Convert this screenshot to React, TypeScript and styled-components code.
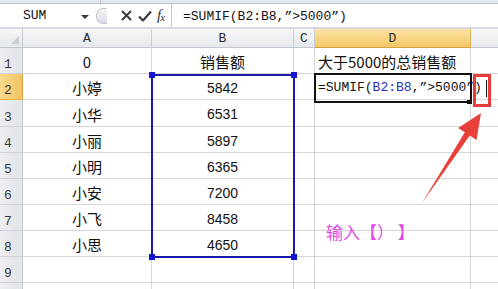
import React from 'react'
import styled, { createGlobalStyle } from 'styled-components'

const GlobalStyle = createGlobalStyle`
  html, body {
    margin: 0;
    padding: 0;
    background: #ffffff;
    overflow: hidden;
  }
`

const CJK = `"Noto Sans CJK SC", "Liberation Sans", sans-serif`
const MONO = `"Liberation Mono", "Noto Sans CJK SC", monospace`

const Root = styled.div`
  position: relative;
  width: 498px;
  height: 289px;
  overflow: hidden;
  background: #ffffff;
  display: flex;
  flex-direction: column;
`

const TopStrip = styled.div`
  height: 4px;
  flex: none;
  background: #e3e7ec;
  border-bottom: 1px solid #b8c0ca;
  box-sizing: border-box;
  display: flex;
`

const StripDivider = styled.div`
  width: 100px;
  border-right: 1px solid #b8c0ca;
`

const FormulaBar = styled.div`
  height: 23px;
  flex: none;
  display: flex;
  background: #ffffff;
`

const NameBox = styled.div`
  width: 92px;
  display: flex;
  align-items: center;
  box-sizing: border-box;
  padding-left: 23px;
  font: 13px ${MONO};
  color: #111;
`

const NameText = styled.span`
  flex: 1;
`

const DropArrow = styled.div`
  width: 0;
  height: 0;
  border-left: 4px solid transparent;
  border-right: 4px solid transparent;
  border-top: 4px solid #3a3a3a;
  margin-right: 3px;
  margin-top: 2px;
`

const Controls = styled.div`
  width: 80px;
  display: flex;
  align-items: center;
  box-sizing: border-box;
  border-right: 1px solid #c4cad2;
`

const Knob = styled.div`
  width: 10px;
  height: 14px;
  margin-left: 4px;
  border-radius: 7px 0 0 7px;
  border: 1px solid #c2c8d0;
  border-right: none;
  background: linear-gradient(#f4f6f8, #d9dde3);
`

const IconBtn = styled.div<{ $gap: number }>`
  width: 18px;
  height: 18px;
  display: flex;
  align-items: center;
  justify-content: center;
  margin-left: ${({ $gap }) => $gap}px;
`

const Fx = styled.span`
  margin-left: 3px;
  font: italic 15px "Liberation Serif", serif;
  color: #333;
  letter-spacing: -1px;
  & > sub {
    font-size: 11px;
    vertical-align: -1px;
  }
`

const FormulaInput = styled.div`
  flex: 1;
  display: flex;
  align-items: center;
  padding: 2px 0 0 11px;
  font: 13px ${MONO};
  color: #111;
  white-space: nowrap;
`

const BarGap = styled.div`
  height: 2px;
  flex: none;
  background: #d6dae0;
`

const Sheet = styled.div`
  flex: none;
  display: grid;
  grid-template-columns: 23px 129px 142px 21px 156px 90px;
  grid-template-rows: 19px 26px 26px 27px 26px 26px 26px 26px 26px 26px 26px;
  background: #ffffff;
`

const Corner = styled.div`
  position: relative;
  background: linear-gradient(#f6f7f9, #e4e7eb);
  border-right: 1px solid #c2c8cf;
  border-bottom: 1px solid #c2c8cf;
  box-sizing: border-box;
  &::after {
    content: '';
    position: absolute;
    right: 3px;
    bottom: 3px;
    width: 0;
    height: 0;
    border-left: 8px solid transparent;
    border-bottom: 8px solid #c9cdd2;
  }
`

const ColHead = styled.div<{ $on?: boolean }>`
  display: flex;
  align-items: flex-end;
  justify-content: center;
  padding-bottom: 1px;
  box-sizing: border-box;
  font: 13px ${MONO};
  color: #2c2c2c;
  background: ${({ $on }) =>
    $on ? 'linear-gradient(#fbe3a4, #f4c766)' : 'linear-gradient(#f7f8fa, #e5e8ec)'};
  border-right: 1px solid ${({ $on }) => ($on ? '#e2b253' : '#c9ced5')};
  border-bottom: 1px solid ${({ $on }) => ($on ? '#d7a13f' : '#c2c8cf')};
`

const RowHead = styled.div<{ $on?: boolean }>`
  display: flex;
  align-items: flex-end;
  padding: 0 0 1px 4px;
  box-sizing: border-box;
  font: 13px ${MONO};
  color: #3a3a3a;
  background: ${({ $on }) =>
    $on ? 'linear-gradient(90deg, #f8d98c, #f3c462)' : 'linear-gradient(90deg, #eceef1, #e1e4e8)'};
  border-right: 1px solid ${({ $on }) => ($on ? '#d7a13f' : '#c2c8cf')};
  border-bottom: 1px solid ${({ $on }) => ($on ? '#e2b253' : '#cdd2d8')};
`

const Cell = styled.div<{ $align: 'center' | 'left'; $num?: boolean }>`
  display: flex;
  align-items: center;
  justify-content: ${({ $align }) => ($align === 'left' ? 'flex-start' : 'center')};
  padding: 2px 0 0 ${({ $align }) => ($align === 'left' ? 3 : 0)}px;
  box-sizing: border-box;
  white-space: nowrap;
  overflow: visible;
  font: ${({ $num }) => ($num ? `14px "Liberation Sans", sans-serif` : `15px ${CJK}`)};
  color: #111;
  border-right: 1px solid #d6d6d6;
  border-bottom: 1px solid #d6d6d6;
`

const FormulaText = styled.span`
  font: 13px ${MONO};
  color: #111;
`

const RangeRef = styled.span`
  color: #2b2bc4;
`

const Selection = styled.div`
  position: absolute;
  left: 151px;
  top: 74px;
  width: 144px;
  height: 184px;
  box-sizing: border-box;
  border: 2px solid #1a1aa8;
  pointer-events: none;
`

const Handle = styled.div<{ $x: number; $y: number }>`
  position: absolute;
  left: ${({ $x }) => $x - 3}px;
  top: ${({ $y }) => $y - 3}px;
  width: 6px;
  height: 6px;
  background: #1414d2;
`

const ActiveCell = styled.div`
  position: absolute;
  left: 314px;
  top: 73px;
  width: 158px;
  height: 30px;
  box-sizing: border-box;
  border: 2px solid #111;
`

const FillHandle = styled.div`
  position: absolute;
  left: 467px;
  top: 100px;
  width: 5px;
  height: 4px;
  background: #111;
`

const Caret = styled.div`
  position: absolute;
  left: 486px;
  top: 80px;
  width: 1px;
  height: 17px;
  background: #111;
`

const RedBox = styled.div`
  position: absolute;
  left: 473px;
  top: 74px;
  width: 18px;
  height: 33px;
  box-sizing: border-box;
  border: 3px solid #e63d3a;
`

const Arrow = styled.svg`
  position: absolute;
  left: 0;
  top: 0;
  pointer-events: none;
`

const Note = styled.div`
  position: absolute;
  left: 326px;
  top: 219px;
  font: 17px ${CJK};
  color: #e24ae4;
  white-space: pre;
  text-spacing-trim: space-all;
  font-kerning: none;
`

// column E runs past the right edge, so its letter is out of view
const columns = ['A', 'B', 'C', 'D', '']

const rows: [string, string, string][] = [
  ['0', '销售额', '大于5000的总销售额'],
  ['小婷', '5842', ''],
  ['小华', '6531', ''],
  ['小丽', '5897', ''],
  ['小明', '6365', ''],
  ['小安', '7200', ''],
  ['小飞', '8458', ''],
  ['小思', '4650', ''],
  ['', '', ''],
  ['', '', ''],
]

export default function App() {
  return (
    <Root>
      <GlobalStyle />
      <TopStrip>
        <StripDivider />
      </TopStrip>
      <FormulaBar>
        <NameBox>
          <NameText>SUM</NameText>
          <DropArrow />
        </NameBox>
        <Controls>
          <Knob />
          <IconBtn $gap={10}>
            <svg width="11" height="11" viewBox="0 0 11 11">
              <path d="M1.5 1.5 L9.5 9.5 M9.5 1.5 L1.5 9.5" stroke="#3c3c3c" strokeWidth="2" strokeLinecap="round" />
            </svg>
          </IconBtn>
          <IconBtn $gap={1}>
            <svg width="14" height="12" viewBox="0 0 14 12">
              <path d="M1 6.5 L5 10.5 L13 1.5" stroke="#3c3c3c" strokeWidth="2.2" fill="none" strokeLinejoin="round" />
            </svg>
          </IconBtn>
          <Fx>
            f<sub>x</sub>
          </Fx>
        </Controls>
        <FormulaInput>=SUMIF(B2:B8,”&gt;5000”)</FormulaInput>
      </FormulaBar>
      <BarGap />
      <Sheet>
        <Corner />
        {columns.map((c, i) => (
          <ColHead key={i} $on={c === 'D'}>
            {c}
          </ColHead>
        ))}
        {rows.map(([a, b, d], i) => (
          <React.Fragment key={i}>
            {/* the 10th row is only a few pixels tall in the view, its number falls below the edge */}
            <RowHead $on={i === 1}>{i < 9 ? i + 1 : ''}</RowHead>
            <Cell $align="center">{a}</Cell>
            <Cell $align="center" $num={/^\d+$/.test(b)}>
              {b}
            </Cell>
            <Cell $align="center" />
            <Cell $align="left">
              {i === 1 ? (
                <FormulaText>
                  =SUMIF(<RangeRef>B2:B8</RangeRef>,”&gt;5000”)
                </FormulaText>
              ) : (
                d
              )}
            </Cell>
            <Cell $align="left" />
          </React.Fragment>
        ))}
      </Sheet>

      <Selection />
      <Handle $x={152} $y={75} />
      <Handle $x={294} $y={75} />
      <Handle $x={152} $y={257} />
      <Handle $x={294} $y={257} />

      <ActiveCell />
      <FillHandle />
      <Caret />
      <RedBox />

      <Arrow width="498" height="289" viewBox="0 0 498 289">
        <polygon
          points="422,203 464.8,132.3 458.1,127.9 481,113 476.5,139.9 469.8,135.5"
          fill="#e8413c"
        />
      </Arrow>

      <Note>输入【） 】</Note>
    </Root>
  )
}
